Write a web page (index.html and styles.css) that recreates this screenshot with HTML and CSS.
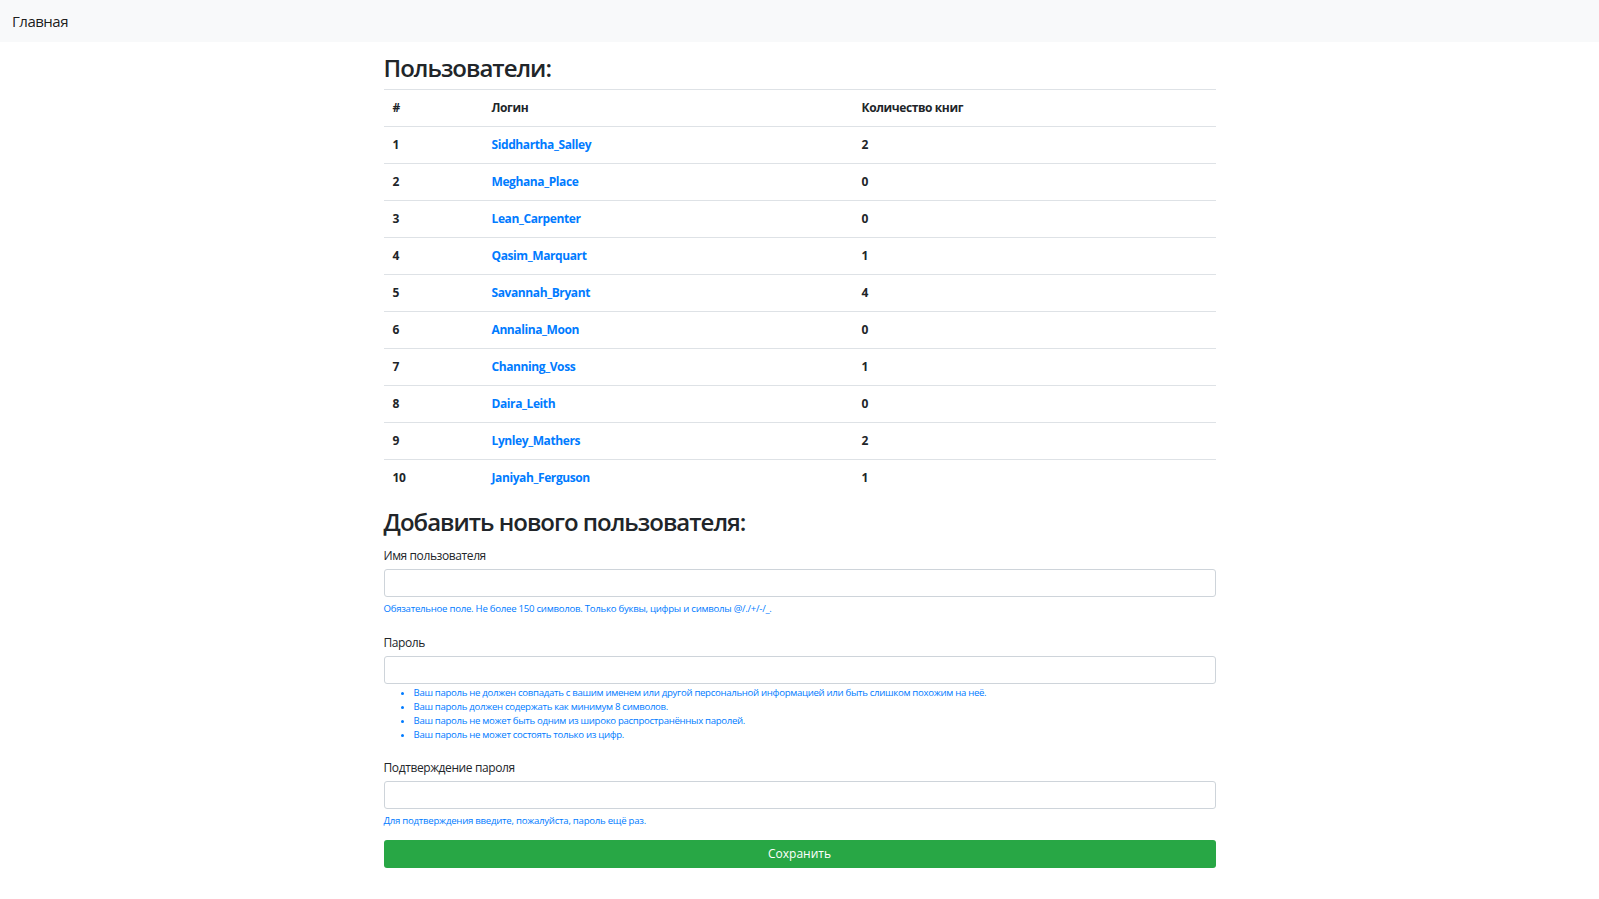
FILE: index.html
```html
<!DOCTYPE html>
<html lang="ru">
<head>
<meta charset="utf-8">
<title>Пользователи</title>
<link rel="stylesheet" href="styles.css">
</head>
<body>
<nav class="navbar">
  <a class="brand" href="#">Главная</a>
</nav>
<main class="container">
  <h2 class="title">Пользователи:</h2>
  <table class="users">
    <tr><th class="c-num">#</th><th class="c-login">Логин</th><th>Количество книг</th></tr>
    <tr><td>1</td><td><a href="#">Siddhartha_Salley</a></td><td>2</td></tr>
    <tr><td>2</td><td><a href="#">Meghana_Place</a></td><td>0</td></tr>
    <tr><td>3</td><td><a href="#">Lean_Carpenter</a></td><td>0</td></tr>
    <tr><td>4</td><td><a href="#">Qasim_Marquart</a></td><td>1</td></tr>
    <tr><td>5</td><td><a href="#">Savannah_Bryant</a></td><td>4</td></tr>
    <tr><td>6</td><td><a href="#">Annalina_Moon</a></td><td>0</td></tr>
    <tr><td>7</td><td><a href="#">Channing_Voss</a></td><td>1</td></tr>
    <tr><td>8</td><td><a href="#">Daira_Leith</a></td><td>0</td></tr>
    <tr><td>9</td><td><a href="#">Lynley_Mathers</a></td><td>2</td></tr>
    <tr><td>10</td><td><a href="#">Janiyah_Ferguson</a></td><td>1</td></tr>
  </table>
  <h2 class="title title-form">Добавить нового пользователя:</h2>
  <form class="form">
    <div class="group group-1">
      <label class="label">Имя пользователя</label>
      <input class="input" type="text">
      <div class="help">Обязательное поле. Не более 150 символов. Только буквы, цифры и символы @/./+/-/_.</div>
    </div>
    <div class="group group-2">
      <label class="label">Пароль</label>
      <input class="input" type="password">
      <ul class="help help-list">
        <li>Ваш пароль не должен совпадать с вашим именем или другой персональной информацией или быть слишком похожим на неё.</li>
        <li>Ваш пароль должен содержать как минимум 8 символов.</li>
        <li>Ваш пароль не может быть одним из широко распространённых паролей.</li>
        <li>Ваш пароль не может состоять только из цифр.</li>
      </ul>
    </div>
    <div class="group group-3">
      <label class="label">Подтверждение пароля</label>
      <input class="input" type="password">
      <div class="help help-last">Для подтверждения введите, пожалуйста, пароль ещё раз.</div>
    </div>
    <button class="btn" type="button">Сохранить</button>
  </form>
</main>
</body>
</html>
```
FILE: styles.css
```css
* { box-sizing: border-box; }
html, body { margin: 0; padding: 0; }
body {
  font-family: "Open Sans", "Noto Sans", sans-serif;
  font-size: 12px;
  line-height: 1.5;
  color: #212529;
  background: #fff;
}
.navbar {
  height: 42px;
  background: #f8f9fa;
  display: flex;
  align-items: center;
  padding: 0 12px;
}
.brand {
  font-size: 15px;
  color: rgba(0,0,0,.9);
  text-decoration: none;
  letter-spacing: -0.5px;
}
.container {
  width: 832px;
  margin: 0 auto;
  padding-top: 12px;
}
.title {
  font-size: 24px;
  font-weight: 600;
  line-height: 28.8px;
  margin: 0 0 6px;
  letter-spacing: -1px;
}
.title-form { margin-top: 12px; margin-bottom: 10px; }
.users {
  width: 100%;
  border-collapse: collapse;
}
.users th, .users td {
  text-align: left;
  font-weight: 700;
  padding: 9px;
  line-height: 18px;
  border-top: 1px solid #dee2e6;
  vertical-align: top;
  letter-spacing: -0.4px;
}
.users .c-num { width: 99px; }
.users .c-login { width: 370px; }
.users a { color: #007bff; text-decoration: none; }
.group { display: flex; flex-direction: column; }
.label {
  line-height: 18px;
  margin-bottom: 4px;
  letter-spacing: -0.4px;
}
.input {
  height: 28px;
  width: 100%;
  border: 1px solid #ced4da;
  border-radius: 3px;
  background: #fff;
  font: inherit;
}
.help {
  font-size: 9.6px;
  line-height: 14px;
  color: #007bff;
  margin-top: 5px;
  letter-spacing: -0.25px;
}
.group-1 { margin-bottom: 18px; }
.group-2 { margin-bottom: 17px; }
.group-3 { margin-bottom: 12px; }
.help-list {
  margin: 2px 0 0;
  padding-left: 30px;
  letter-spacing: -0.3px;
}
.help-last { margin-top: 5px; }
.btn {
  display: block;
  width: 100%;
  height: 28px;
  border: none;
  border-radius: 3px;
  background: #28a745;
  color: #fff;
  font: inherit;
  font-size: 12px;
}
```
